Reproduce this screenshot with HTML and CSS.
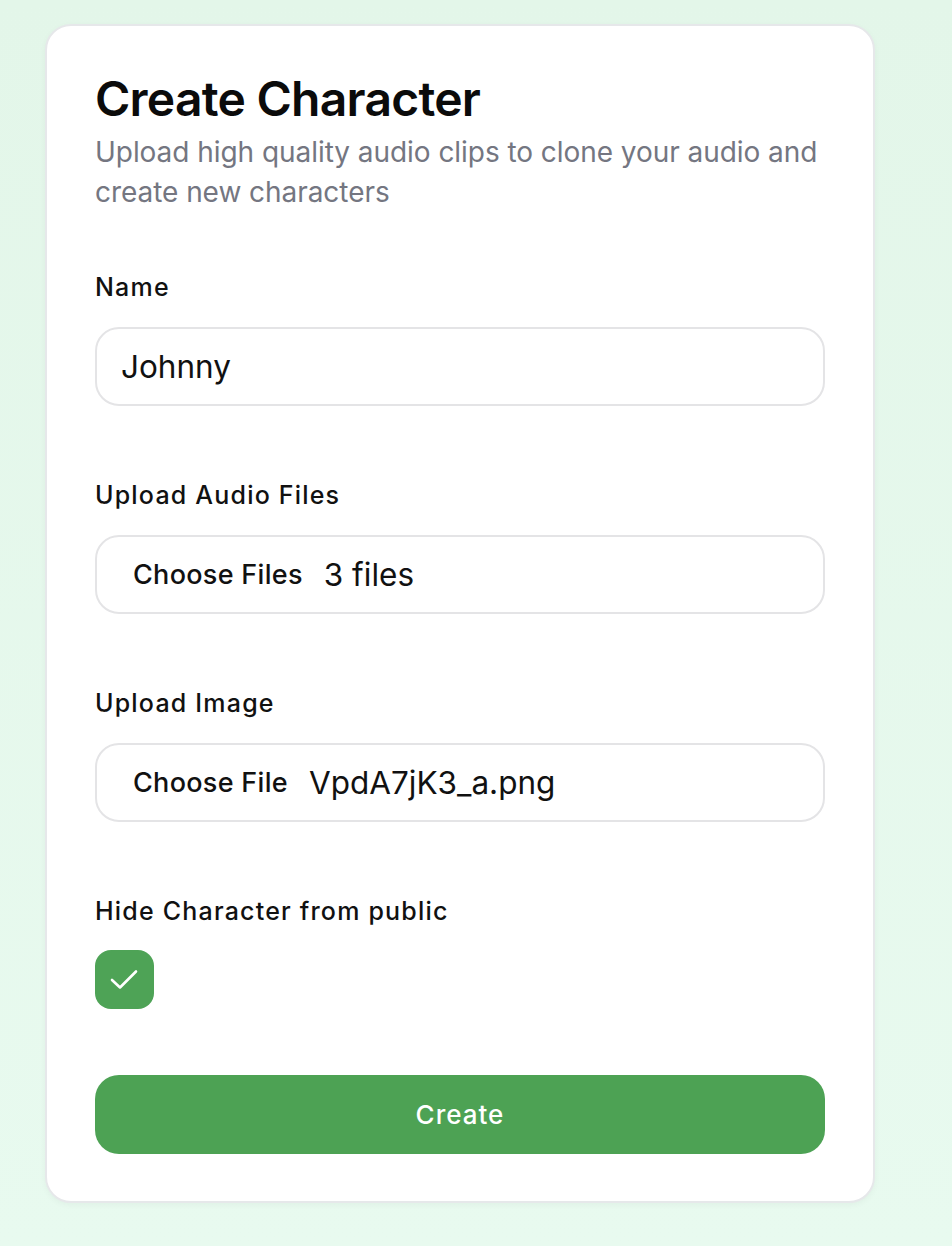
FILE: index.html
```html
<!DOCTYPE html>
<html lang="en">
<head>
<meta charset="utf-8">
<title>Create Character</title>
<link rel="stylesheet" href="styles.css">
</head>
<body>
<main class="page">
  <section class="card">
    <h1 class="title">Create Character</h1>
    <p class="subtitle">Upload high quality audio clips to clone your audio and create new characters</p>

    <div class="field">
      <div class="label">Name</div>
      <div class="input"><span class="value">Johnny</span></div>
    </div>

    <div class="field">
      <div class="label">Upload Audio Files</div>
      <div class="input file"><span class="file-btn">Choose Files</span><span class="value">3 files</span></div>
    </div>

    <div class="field">
      <div class="label">Upload Image</div>
      <div class="input file"><span class="file-btn">Choose File</span><span class="value">VpdA7jK3_a.png</span></div>
    </div>

    <div class="field check-field">
      <div class="label">Hide Character from public</div>
      <div class="checkbox">
        <svg width="58" height="59" viewBox="0 0 58 59" fill="none"><path d="M17 30 L25 37.5 L41 21.5" stroke="#fff" stroke-width="2.6" stroke-linecap="round" stroke-linejoin="round"/></svg>
      </div>
    </div>

    <button class="create">Create</button>
  </section>
</main>
</body>
</html>
```

FILE: styles.css
```css
* { box-sizing: border-box; }
html, body { margin: 0; padding: 0; }
body {
  background: linear-gradient(180deg, #e3f6e9 0%, #e8faef 100%);
  font-family: Inter, "Noto Sans", sans-serif;
  color: #111;
  min-height: 1246px;
}
.page {
  padding: 24px 0 0 45px;
}
.card {
  width: 830px;
  background: #fff;
  border: 2px solid #e6e8ea;
  border-radius: 26px;
  padding: 45px 48px 47px 48px;
  box-shadow: 0 2px 6px rgba(0,0,0,0.04);
}
.title {
  margin: 0;
  font-size: 48px;
  line-height: 56px;
  font-weight: 600;
  letter-spacing: -0.75px;
  color: #0b0b0b;
}
.subtitle {
  margin: 5px 0 0 0;
  font-size: 28px;
  line-height: 40px;
  color: #747681;
  letter-spacing: -0.05px;
}
.field {
  display: flex;
  flex-direction: column;
  gap: 24px;
}
.subtitle + .field { margin-top: 59px; }
.field + .field { margin-top: 73px; }
.label {
  font-size: 25px;
  line-height: 32px;
  font-weight: 500;
  letter-spacing: 1.2px;
  color: #111;
}
.input {
  height: 79px;
  border: 2px solid #e4e4e6;
  border-radius: 24px;
  display: flex;
  align-items: center;
  padding: 0 24px;
}
.input .value {
  font-size: 31.5px;
  color: #111;
}
.input.file { padding-left: 36px; }
.file-btn {
  font-size: 27px;
  font-weight: 500;
  letter-spacing: 0.3px;
  margin-right: 21px;
}
.check-field { gap: 23px; }
.checkbox {
  width: 59px;
  height: 59px;
  border-radius: 16px;
  background: #4ea356;
  display: flex;
}
.create {
  margin-top: 66px;
  display: block;
  width: 100%;
  height: 79px;
  border: none;
  border-radius: 24px;
  background: #4da254;
  color: #fff;
  font-family: Inter, "Noto Sans", sans-serif;
  font-size: 26px;
  font-weight: 500;
  letter-spacing: 1px;
}
```
